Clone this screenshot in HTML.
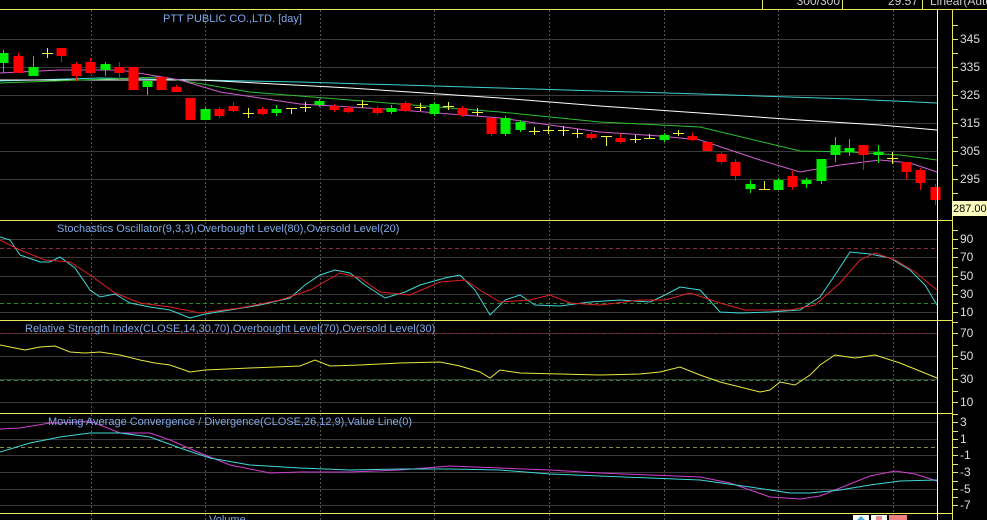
<!DOCTYPE html>
<html><head><meta charset="utf-8"><style>
body{margin:0;background:#000;width:987px;height:520px;overflow:hidden;font-family:"Liberation Sans",sans-serif}
svg{display:block}
</style></head><body>
<svg id="s" width="987" height="520" xmlns="http://www.w3.org/2000/svg" font-family="Liberation Sans, sans-serif">
<rect width="987" height="520" fill="#000"/>
<g id="grid"></g>
<g id="lines"></g>
<g id="candles"></g>
<line x1="0" y1="9.5" x2="987" y2="9.5" stroke="#e8e85a"/>
<line x1="762.5" y1="0" x2="762.5" y2="9" stroke="#e8e85a"/>
<line x1="842.5" y1="0" x2="842.5" y2="9" stroke="#e8e85a"/>
<line x1="922.5" y1="0" x2="922.5" y2="9" stroke="#e8e85a"/>
<text x="840" y="5" fill="#ccc" font-size="12" text-anchor="end">300/300</text>
<text x="918" y="5" fill="#ccc" font-size="12" text-anchor="end">29.57</text>
<text x="930" y="5" fill="#ccc" font-size="12">Linear(Auto</text>
<g stroke="#e8e85a">
<line x1="0" y1="220.5" x2="952" y2="220.5"/>
<line x1="0" y1="320.5" x2="952" y2="320.5"/>
<line x1="0" y1="413.5" x2="952" y2="413.5"/>
<line x1="0" y1="513.5" x2="952" y2="513.5"/>
<line x1="952.5" y1="10" x2="952.5" y2="520"/>
</g>
<line x1="937.5" y1="10" x2="937.5" y2="520" stroke="#fff"/>
<g id="axis" fill="#ddd" font-size="12"></g>
<rect x="952" y="201" width="35" height="15" fill="#ffffc0"/>
<text x="953" y="212" fill="#000" font-size="11">287.00</text>
<g fill="#7fa9e8" font-size="11">
<text x="163" y="22">PTT PUBLIC CO.,LTD. [day]</text>
<text x="57" y="232">Stochastics Oscillator(9,3,3),Overbought Level(80),Oversold Level(20)</text>
<text x="25" y="332">Relative Strength Index(CLOSE,14,30,70),Overbought Level(70),Oversold Level(30)</text>
<text x="48" y="425">Moving Average Convergence / Divergence(CLOSE,26,12,9),Value Line(0)</text>
<text x="209" y="523">Volume</text>
</g>
<rect x="853" y="515" width="16" height="6" fill="#fff"/>
<rect x="871" y="515" width="16" height="6" fill="#fff"/>
<rect x="889" y="515" width="18" height="6" fill="#f08080"/>
<path d="M857 520 L861 516 L865 520Z" fill="#4aa8d8"/>
<rect x="876" y="516" width="6" height="5" fill="#e89090"/>
</svg>
<script>
const NS="http://www.w3.org/2000/svg";
function el(p,t,a){const e=document.createElementNS(NS,t);for(const k in a)e.setAttribute(k,a[k]);document.getElementById(p).appendChild(e);return e;}
for(let x=90.5;x<937;x+=114.65){el('grid','line',{x1:Math.round(x)+.5,y1:10,x2:Math.round(x)+.5,y2:520,stroke:'#555','stroke-dasharray':'2,2'});}
function hline(y,c,d){el('grid','line',{x1:0,y1:y+.5,x2:937,y2:y+.5,stroke:c||'#3a3a3a','stroke-dasharray':d||''});}
function lab(y,t){const e=el('axis','text',{x:960,y:y+4});e.textContent=t;}
function tick(y){el('grid','line',{x1:952,y1:y+.5,x2:958,y2:y+.5,stroke:'#e8e85a'});}
[[345,39],[335,67],[325,95],[315,123],[305,151],[295,179]].forEach(a=>{hline(a[1]);lab(a[1],a[0]);tick(a[1]);tick(a[1]-14);});
tick(193);
[[90,239],[70,257],[50,276],[30,294],[10,312]].forEach(a=>{hline(a[1]);lab(a[1],a[0]);tick(a[1]);tick(a[1]-9);});
hline(248,'#8a2a3a','4,3');hline(303,'#2a8a2a','4,3');
[[70,333],[50,356],[30,379],[10,402]].forEach(a=>{hline(a[1]);lab(a[1],a[0]);tick(a[1]);tick(a[1]-11);});
hline(333,'#8a2a3a','4,3');hline(380,'#2a8a2a','4,3');
[[3,422],[1,439],[-1,455],[-3,472],[-5,489],[-7,505]].forEach(a=>{hline(a[1]);lab(a[1],a[0]);tick(a[1]);tick(a[1]-8);});
hline(447,'#8a8a3a','4,3');
function pl(c,pts){el('lines','polyline',{points:pts.map(p=>p.join(',')).join(' '),fill:'none',stroke:c,'stroke-width':1});}
pl('#40d0d0',[[0,81],[100,78],[300,82],[500,88],[700,94],[850,99],[937,103]]);
pl('#ffffff',[[0,80],[200,80],[350,88],[500,98],[600,106],[700,113],[800,120],[880,125],[937,130]]);
pl('#30c030',[[0,83],[160,77],[250,92],[350,100],[500,112],[600,122],[700,127],[800,151],[850,152],[900,155],[937,160]]);
pl('#d060d0',[[0,73],[60,70],[120,70],[180,80],[220,92],[300,104],[400,110],[500,118],[600,132],[660,136],[700,140],[760,160],[800,172],[840,165],[880,160],[910,163],[937,172]]);
pl('#40d8d8',[[0,237],[10,240],[20,255],[40,262],[50,262],[60,257],[75,268],[90,290],[100,297],[115,294],[130,303],[150,307],[170,310],[190,318],[205,314],[230,310],[260,305],[290,298],[305,285],[320,275],[335,270],[350,273],[365,285],[385,298],[405,292],[420,285],[445,278],[460,275],[475,290],[490,315],[505,300],[520,295],[535,305],[560,306],[590,302],[620,300],[650,302],[665,295],[680,287],[700,290],[720,312],[740,313],[770,312],[800,310],[820,297],[835,275],[850,252],[870,254],[890,258],[910,270],[925,285],[937,305]]);
pl('#e02020',[[0,240],[20,250],[45,260],[70,262],[90,275],[115,293],[140,303],[170,307],[200,313],[240,308],[280,300],[310,290],[340,273],[360,278],[380,292],[410,295],[440,282],[465,280],[480,290],[500,302],[530,300],[550,295],[570,303],[600,305],[640,300],[665,300],[690,293],[720,303],[745,310],[790,310],[815,305],[840,283],[860,260],[875,253],[895,260],[915,272],[937,290]]);
pl('#e8e840',[[0,345],[15,348],[25,350],[40,347],[55,346],[70,352],[85,353],[100,352],[120,355],[140,360],[155,363],[170,365],[190,372],[205,370],[250,368],[300,366],[315,360],[330,366],[360,365],[400,363],[440,362],[460,366],[480,372],[490,378],[500,370],[520,373],[560,374],[600,375],[640,374],[660,372],[680,367],[700,375],[720,382],[760,392],[770,390],[780,382],[795,385],[810,375],[820,365],[835,355],[855,358],[875,355],[900,363],[937,378]]);
pl('#d040d0',[[0,429],[20,428],[50,423],[60,423],[90,421],[120,433],[150,433],[170,440],[200,453],[230,465],[270,473],[300,472],[350,472],[400,470],[450,466],[500,468],[550,470],[600,473],[650,475],[700,477],[730,483],[770,497],[800,499],[820,496],[840,488],[870,476],[895,471],[915,474],[937,481]]);
pl('#40d8d8',[[0,452],[30,443],[60,437],[90,433],[120,433],[150,437],[180,448],[210,458],[250,465],[300,468],[350,470],[400,469],[450,469],[500,470],[550,474],[600,476],[650,478],[700,480],[750,487],[790,493],[810,493],[840,490],[870,485],[900,481],[937,480]]);
const C=[[3,'g',53,63,50,73],[18,'r',56,73,53,73],[33,'g',67,76,56,76],[47,'y',53,53,48,58],[61,'r',48,56,48,62],[76,'r',64,76,62,81],[90,'r',62,73,58,74],[105,'g',64,70,62,76],[119,'r',67,73,62,79],[133,'r',67,90,67,90],[147,'g',81,87,81,95],[161,'r',77,90,76,90],[176,'r',87,92,85,92],[190,'r',98,120,98,120],[205,'g',109,120,107,120],[219,'r',109,116,107,118],[233,'r',106,111,102,112],[248,'y',113,113,108,118],[262,'r',109,114,107,115],[276,'g',109,113,105,116],[291,'y',108,108,108,114],[305,'y',107,107,102,112],[319,'g',101,105,99,107],[334,'r',106,110,104,112],[348,'r',108,112,106,113],[362,'y',104,104,100,108],[377,'r',108,113,106,115],[391,'g',108,112,105,114],[405,'r',103,111,101,112],[420,'y',107,107,103,111],[434,'g',104,114,102,116],[448,'y',106,106,102,110],[462,'r',108,115,106,117],[477,'y',112,112,108,116],[491,'r',118,134,116,136],[505,'g',118,134,116,136],[520,'g',122,130,120,132],[534,'y',131,131,127,135],[548,'y',130,130,126,134],[563,'y',130,130,126,136],[577,'y',133,133,129,138],[591,'r',134,138,132,140],[606,'y',136,136,136,146],[620,'r',138,142,134,143],[635,'y',139,139,135,143],[649,'y',138,138,134,138],[664,'g',135,140,133,142],[678,'y',133,133,130,136],[692,'r',136,140,133,141],[707,'r',142,151,141,152],[721,'r',154,162,152,164],[735,'r',162,176,159,181],[750,'g',184,189,180,193],[764,'y',189,189,181,189],[778,'g',180,190,178,190],[792,'r',176,187,171,190],[806,'g',180,184,178,188],[821,'g',159,181,159,184],[835,'g',145,155,137,162],[849,'g',148,152,139,156],[863,'r',145,155,145,170],[878,'g',152,155,145,163],[892,'y',158,158,152,164],[906,'r',162,172,162,179],[920,'r',170,183,168,190],[935,'r',187,200,184,205]];
C.forEach(c=>{const[x,t,a,b,wa,wb]=c;const col=t=='g'?'#00ee00':t=='r'?'#ff0000':'#f0f040';
el('candles','line',{x1:x+.5,y1:wa,x2:x+.5,y2:wb,stroke:col});
if(t=='y')el('candles','line',{x1:x-5,y1:a+.5,x2:x+6,y2:a+.5,stroke:col});
else el('candles','rect',{x:x-4.5,y:a,width:10,height:Math.max(b-a,3),fill:col});});
</script>
</body></html>
